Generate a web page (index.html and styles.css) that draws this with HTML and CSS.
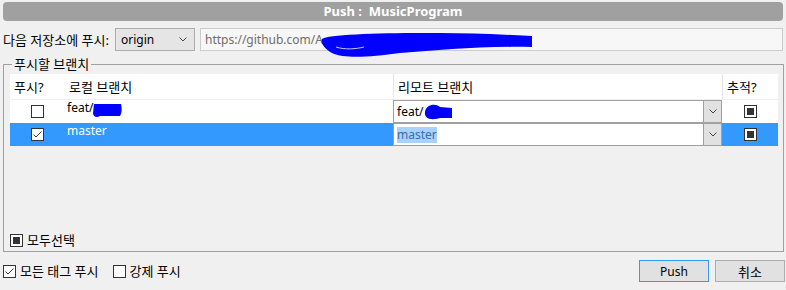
FILE: index.html
```html
<!DOCTYPE html>
<html lang="ko">
<head>
  <meta charset="UTF-8">
  <title>Push : MusicProgram</title>
  <link rel="stylesheet" href="styles.css">
</head>
<body>
  <div class="dialog">
    <div class="titlebar">Push :&nbsp; MusicProgram</div>

    <div class="remote-row">
      <span class="label">다음 저장소에 푸시:</span>
      <div class="combo latin">
        <span>origin</span>
        <svg class="chevron" width="8" height="5" viewBox="0 0 8 5"><path d="M0.5 0.5 L4 4 L7.5 0.5" fill="none" stroke="#444" stroke-width="1"/></svg>
      </div>
      <div class="url-field latin">https://github.com/A</div>
    </div>

    <fieldset class="branches">
      <legend>푸시할 브랜치</legend>
      <div class="list">
        <div class="row head">
          <div class="cell">푸시?</div>
          <div class="cell local">로컬 브랜치</div>
          <div class="cell remote-head">리모트 브랜치</div>
          <div class="cell track-head">추적?</div>
        </div>
        <div class="row">
          <div class="cell center"><span class="box"></span></div>
          <div class="cell local latin">feat/</div>
          <div class="cell remote latin">
            <div class="edit">feat/</div>
            <div class="drop"><svg class="chevron" width="8" height="5" viewBox="0 0 8 5"><path d="M0.5 0.5 L4 4 L7.5 0.5" fill="none" stroke="#444" stroke-width="1"/></svg></div>
          </div>
          <div class="cell center"><span class="box partial"></span></div>
        </div>
        <div class="row selected">
          <div class="cell center">
            <span class="box"><svg width="11" height="11" viewBox="0 0 11 11"><path d="M1.5 5.5 L4 8 L9.5 2.5" fill="none" stroke="#333" stroke-width="1"/></svg></span>
          </div>
          <div class="cell local latin">master</div>
          <div class="cell remote latin">
            <div class="edit"><span class="hl">master</span></div>
            <div class="drop"><svg class="chevron" width="8" height="5" viewBox="0 0 8 5"><path d="M0.5 0.5 L4 4 L7.5 0.5" fill="none" stroke="#444" stroke-width="1"/></svg></div>
          </div>
          <div class="cell center"><span class="box partial"></span></div>
        </div>
      </div>
      <label class="check select-all"><span class="box partial"></span>모두선택</label>
    </fieldset>

    <div class="footer">
      <label class="check"><span class="box"><svg width="11" height="11" viewBox="0 0 11 11"><path d="M1.5 5.5 L4 8 L9.5 2.5" fill="none" stroke="#333" stroke-width="1"/></svg></span>모든 태그 푸시</label>
      <label class="check"><span class="box"></span>강제 푸시</label>
      <div class="buttons">
        <button class="btn default latin">Push</button>
        <button class="btn">취소</button>
      </div>
    </div>

    <!-- redaction marks drawn over the screenshot -->
    <svg class="marks" width="786" height="290" viewBox="0 0 786 290">
      <path d="M322,39 C330,33 420,32 490,34 L532,36 L532,47 C480,46 440,50 400,53 C370,57 345,59 332,53 C325,49 320,43 322,39 Z" fill="#0000ff"/>
      <path d="M336,47 C345,50 356,49 364,47" fill="none" stroke="#c8c8f0" stroke-width="1"/>
      <path d="M94,104 L121,104 C122,108 122,113 120,116 L100,116 C97,118 93,117 93,113 Z" fill="#0000ff"/>
      <path d="M425,112 C426,104 436,103 440,107 L452,108 L452,118 L440,118 C430,121 424,118 425,112 Z" fill="#0000ff"/>
    </svg>
  </div>
</body>
</html>
```

FILE: styles.css
```css
:root {
  --bg: #f0f0f0;
  --text: #000000;
  --border: #adadad;
  --select: #3399ff;
  --button: #e1e1e1;
}

body {
  margin: 0;
  width: 786px;
  height: 290px;
  overflow: hidden;
  background: var(--bg);
  color: var(--text);
  font-family: "Noto Sans", "Noto Sans CJK KR", sans-serif;
  font-size: 13px;
  line-height: 16px;
}

.latin {
  font-size: 12px;
}

.dialog {
  position: relative;
  height: 290px;
  padding: 2px 3px 0 3px;
  box-sizing: border-box;
}

.titlebar {
  height: 19px;
  background: #a0a0a0;
  border-radius: 4px;
  color: #ffffff;
  font-weight: bold;
  font-size: 13px;
  line-height: 19px;
  text-align: center;
}

.remote-row {
  display: flex;
  align-items: center;
  gap: 5px;
  margin-top: 7px;
  height: 23px;
}

.label {
  width: 107px;
  white-space: nowrap;
}

.combo {
  width: 80px;
  height: 23px;
  box-sizing: border-box;
  display: flex;
  align-items: center;
  justify-content: space-between;
  padding: 0 7px 0 5px;
  background: #e5e5e5;
  border: 1px solid var(--border);
}

.url-field {
  flex: 1;
  height: 23px;
  box-sizing: border-box;
  padding: 0 4px;
  line-height: 21px;
  background: #f7f7f7;
  border: 1px solid #cccccc;
  color: #6d6d6d;
}

.branches {
  margin: 5px 0 0 0;
  padding: 2px 5px 0 6px;
  border: 1px solid #a0a0a0;
  height: 196px;
  box-sizing: border-box;
}

.branches legend {
  padding: 0 2px;
  margin-left: 2px;
  line-height: 16px;
}

.list {
  height: 155px;
}

.row {
  display: grid;
  grid-template-columns: 54px 329px 329px 56px;
  height: 23px;
  background: #ffffff;
}

.row.head {
  height: 25px;
  border-bottom: 1px solid #f0f0f0;
}

.row.selected {
  background: var(--select);
  color: #ffffff;
}

.cell {
  display: flex;
  align-items: center;
  padding-left: 4px;
  overflow: hidden;
  white-space: nowrap;
}

.row.head .cell {
  align-items: flex-start;
  padding-top: 5px;
}

.cell.local {
  padding-left: 3px;
  align-items: flex-start;
}

.row.head .cell.local {
  padding-left: 5px;
}

.remote-head,
.track-head {
  border-left: 1px solid #e5e5e5;
}

.cell.center {
  justify-content: center;
  padding-left: 0;
}

.cell.remote {
  padding: 0;
  align-items: stretch;
  border: 1px solid #a0a0a0;
  border-right: none;
  background: #ffffff;
  color: var(--text);
}

.edit {
  flex: 1;
  padding-left: 3px;
  display: flex;
  align-items: center;
}

.hl {
  background: #a8d1ff;
  color: #3a6ea5;
}

.drop {
  width: 17px;
  display: flex;
  align-items: center;
  justify-content: center;
  background: #e1e1e1;
  border-left: 1px solid #a0a0a0;
  border-right: 1px solid #a0a0a0;
}

.box {
  width: 13px;
  height: 13px;
  box-sizing: border-box;
  border: 1px solid #333333;
  background: #ffffff;
  display: inline-flex;
  align-items: center;
  justify-content: center;
  flex-shrink: 0;
}

.box.partial::after {
  content: "";
  width: 7px;
  height: 7px;
  background: #333333;
}

.check {
  display: flex;
  align-items: center;
  gap: 4px;
}

.select-all {
  margin-top: 2px;
  height: 18px;
}

.footer {
  display: flex;
  align-items: center;
  gap: 14px;
  margin-top: 8px;
  height: 22px;
}

.buttons {
  margin-left: auto;
  margin-right: -2px;
  display: flex;
  gap: 6px;
}

.btn {
  width: 70px;
  height: 22px;
  padding: 0;
  background: var(--button);
  border: 1px solid var(--border);
  font-family: inherit;
  font-size: 13px;
  color: var(--text);
}

.btn.latin {
  font-size: 12px;
}

.btn.default {
  border-color: #3399ff;
}

.marks {
  position: absolute;
  top: 0;
  left: 0;
  pointer-events: none;
}
```
